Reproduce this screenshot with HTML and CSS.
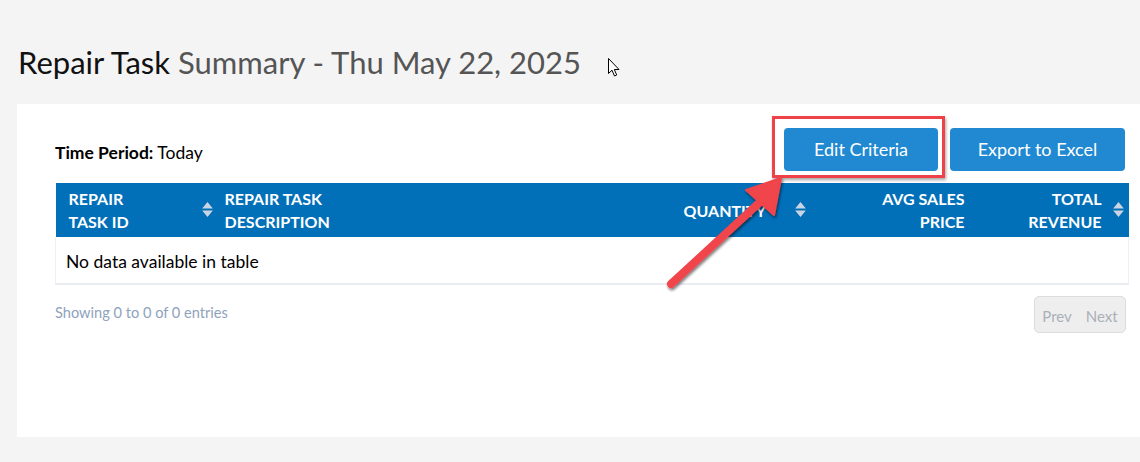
FILE: index.html
```html
<!DOCTYPE html>
<html>
<head>
<meta charset="utf-8">
<link rel="stylesheet" href="styles.css">
</head>
<body>
<div class="page">
  <h1 class="title"><span class="title-main">Repair Task</span> <span class="title-sub">Summary - Thu May 22, 2025</span></h1>
  <div class="card">
    <div class="content">
      <div class="toolbar">
        <div class="period"><b>Time Period:</b> Today</div>
        <div class="actions">
          <button class="btn">Edit Criteria</button>
          <button class="btn btn-export">Export to Excel</button>
        </div>
      </div>
      <table class="grid">
        <colgroup>
          <col class="c1"><col class="c2"><col class="c3"><col class="c4"><col class="c5">
        </colgroup>
        <thead>
          <tr>
            <th class="sortable left">REPAIR<br>TASK ID<svg class="sort" viewBox="0 0 10 14"><path d="M0 6 L5 0 L10 6 Z M0 8 L10 8 L5 14 Z"/></svg></th>
            <th class="left desc">REPAIR TASK<br>DESCRIPTION</th>
            <th class="sortable right qty">QUANTITY<svg class="sort" viewBox="0 0 10 14"><path d="M0 6 L5 0 L10 6 Z M0 8 L10 8 L5 14 Z"/></svg></th>
            <th class="right avg">AVG SALES<br>PRICE</th>
            <th class="sortable right rev">TOTAL<br>REVENUE<svg class="sort" viewBox="0 0 10 14"><path d="M0 6 L5 0 L10 6 Z M0 8 L10 8 L5 14 Z"/></svg></th>
          </tr>
        </thead>
        <tbody>
          <tr><td colspan="5" class="empty">No data available in table</td></tr>
        </tbody>
      </table>
      <div class="footer">
        <div class="info">Showing 0 to 0 of 0 entries</div>
        <div class="pager"><span>Prev</span><span>Next</span></div>
      </div>
    </div>
  </div>
</div>
<div class="highlight"></div>
<svg class="arrow" viewBox="0 0 160 140" width="160" height="140">
  <defs>
    <filter id="sh" x="-30%" y="-30%" width="160%" height="160%">
      <feGaussianBlur in="SourceAlpha" stdDeviation="1.6"/>
      <feOffset dx="1" dy="2" result="b"/>
      <feComponentTransfer><feFuncA type="linear" slope="0.55"/></feComponentTransfer>
      <feMerge><feMergeNode/><feMergeNode in="SourceGraphic"/></feMerge>
    </filter>
  </defs>
  <g filter="url(#sh)" fill="#f0444b" stroke="#f0444b">
    <line x1="31" y1="124" x2="120" y2="42" stroke-width="8" stroke-linecap="round"/>
    <path d="M141 18 L106 30 L134 55 Z" stroke-width="2" stroke-linejoin="round"/>
  </g>
</svg>
<svg class="cursor" viewBox="0 0 12 19" width="12" height="19">
  <path d="M0.5 0.5 L0.5 15.5 L4 12.2 L6.5 18 L8.7 17 L6.3 11.5 L11 11.5 Z" fill="#fff" stroke="#000" stroke-width="1" stroke-linejoin="miter"/>
</svg>
</body>
</html>
```

FILE: styles.css
```css
html, body {
  margin: 0;
  padding: 0;
  overflow: hidden;
}
body {
  background: #f4f4f4;
  font-family: Lato, "Noto Sans", sans-serif;
  color: #000;
  width: 1140px;
  height: 462px;
  position: relative;
}
.page {
  padding-top: 44px;
}
.title {
  margin: 0 0 24px 18px;
  font-size: 31px;
  font-weight: 400;
  line-height: 36px;
  white-space: nowrap;
}
.title-main { color: #111; }
.title-sub { color: #555; }
.card {
  margin-left: 17px;
  width: 1160px;
  height: 333px;
  background: #fff;
  padding: 24px 0 0 38px;
  box-sizing: border-box;
}
.content {
  width: 1073px;
}
.toolbar {
  display: flex;
  justify-content: space-between;
  align-items: center;
  height: 43px;
}
.period {
  font-size: 17.5px;
  padding-top: 6px;
}
.period b { font-weight: 700; }
.actions {
  display: flex;
  gap: 12px;
  padding-right: 3px;
}
.btn {
  font-family: Lato, "Noto Sans", sans-serif;
  font-size: 18px;
  color: #fff;
  background: #2089d2;
  border: none;
  border-radius: 4px;
  height: 43px;
  width: 154px;
  padding: 0 0 2px;
}
.btn-export { width: 175px; }
.grid {
  margin-top: 12px;
  width: 1073px;
  border-collapse: collapse;
  table-layout: fixed;
}
.c1 { width: 161px; }
.c2 { width: 454px; }
.c3 { width: 142px; }
.c4 { width: 164px; }
.c5 { width: 152px; }
.grid thead tr {
  background: #0170b9;
  height: 54px;
}
.grid th {
  color: #fff;
  font-size: 16px;
  font-weight: 700;
  line-height: 23px;
  padding: 4px 13px;
  vertical-align: middle;
  position: relative;
  white-space: nowrap;
}
.grid th.left { text-align: left; }
.grid th.right { text-align: right; }
.grid th.sortable.left { padding-right: 24px; }
.grid th.desc { padding-left: 8px; }
.grid th.qty { padding-right: 50px; }
.grid th.avg { padding-right: 12px; }
.grid th.rev { padding-right: 27px; }
.sort {
  position: absolute;
  width: 11px;
  height: 15px;
  top: 50%;
  margin-top: -8px;
  right: 4px;
  fill: #c9d5e2;
}
.qty .sort { right: 7px; }
.rev .sort { right: 5px; }
.grid td.empty {
  font-size: 17.5px;
  height: 43px;
  padding: 3px 10px 0;
  border-left: 1px solid #eef0f3;
  border-right: 1px solid #eef0f3;
  border-bottom: 2px solid #e9edf2;
}
.footer {
  display: flex;
  justify-content: space-between;
  align-items: flex-start;
  margin-top: 11px;
  padding-right: 2px;
}
.info {
  font-size: 14.6px;
  color: #8fa2bd;
  padding-top: 8px;
}
.pager {
  display: flex;
  gap: 14px;
  background: #eeeeee;
  border: 1px solid #dcdcdc;
  border-radius: 5px;
  align-items: center;
  justify-content: center;
  font-size: 15px;
  color: #aab0b8;
  box-sizing: border-box;
  height: 37px;
  width: 92px;
  padding-top: 2px;
}
.highlight {
  position: absolute;
  left: 772px;
  top: 116px;
  width: 173px;
  height: 62px;
  border: 3px solid #ee4148;
  box-sizing: border-box;
  box-shadow: 1px 2px 3px rgba(0,0,0,0.35);
}
.arrow {
  position: absolute;
  left: 640px;
  top: 160px;
}
.cursor {
  position: absolute;
  left: 608px;
  top: 58px;
}
```
